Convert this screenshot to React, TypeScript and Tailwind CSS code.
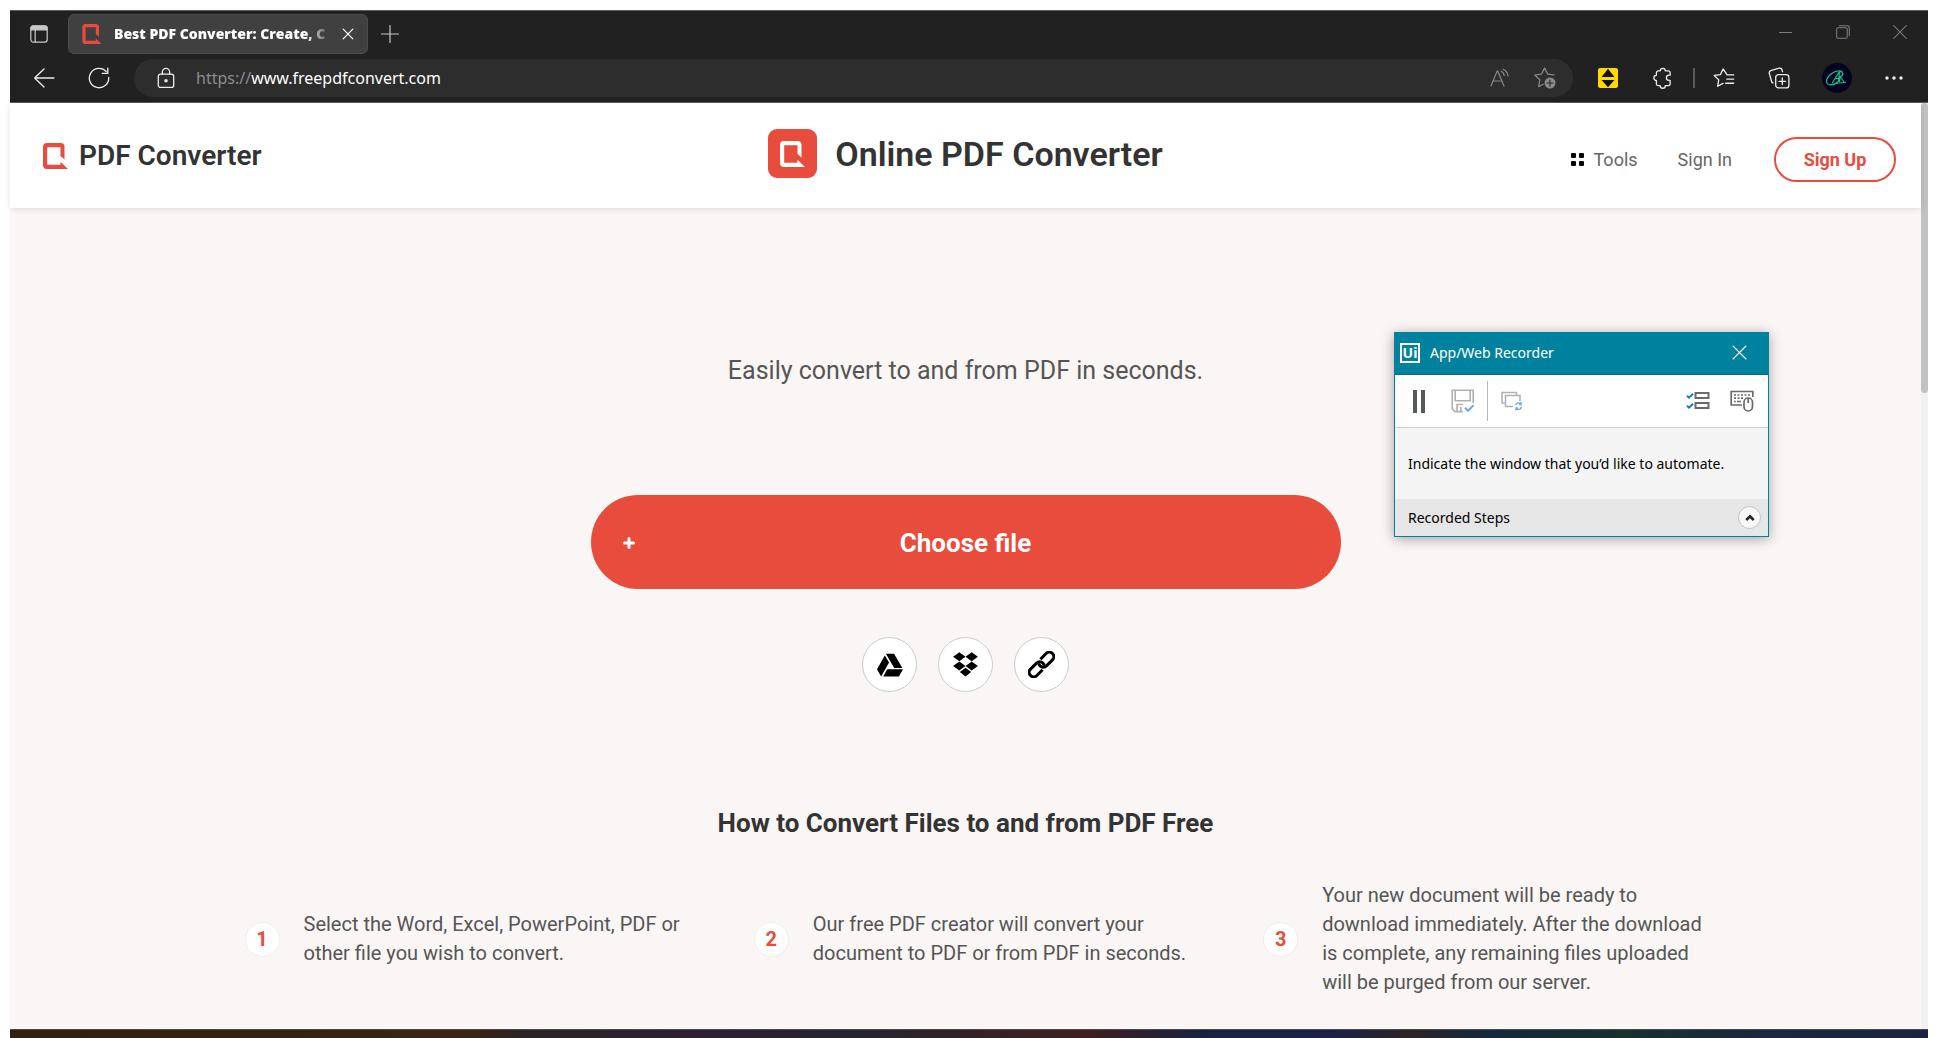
import type { ReactNode } from "react";
import { FaGoogleDrive } from "react-icons/fa";

function LogoMark({ className }: { className: string }) {
  return (
    <svg viewBox="0 0 25 26" className={className} fill="currentColor" aria-hidden="true">
      <path d="M4 0h13.5a4 4 0 0 1 4 4v12.5l-4-3.5V4.2H4.2v17.6h13.3v-3.1L25 26H4a4 4 0 0 1-4-4V4a4 4 0 0 1 4-4z" />
    </svg>
  );
}

function Icon({ size = 20, width = 1.2, className = "", children }: { size?: number; width?: number; className?: string; children: ReactNode }) {
  return (
    <svg
      width={size}
      height={size}
      viewBox="0 0 20 20"
      fill="none"
      stroke="currentColor"
      strokeWidth={width}
      strokeLinecap="round"
      strokeLinejoin="round"
      className={className}
      aria-hidden="true"
    >
      {children}
    </svg>
  );
}

function IconButton({ label, className = "", children }: { label: string; className?: string; children: ReactNode }) {
  return (
    <button type="button" aria-label={label} className={`flex h-8 shrink-0 items-center justify-center ${className}`}>
      {children}
    </button>
  );
}

function TabRow() {
  return (
    <div className="flex h-10 items-center">
      <IconButton label="Tab actions" className="ml-3 w-[34px] text-[#c8c8c8]">
        <Icon size={20}>
          <rect x="1.8" y="1.8" width="16.4" height="16.4" rx="2.6" />
          <path d="M2 3.4A1.6 1.6 0 0 1 3.6 2h12.8A1.6 1.6 0 0 1 18 3.6V5.8H2z" fill="currentColor" />
          <path d="M6.2 6v12" />
        </Icon>
      </IconButton>
      <div className="ml-3 flex h-10 w-[300px] items-center rounded-md border border-[#4c4c4c] bg-[#404040] pl-[13px]">
        <LogoMark className="h-5 w-5 shrink-0 text-[#e74c3c]" />
        <button
          type="button"
          className="ml-3 w-[218px] overflow-hidden text-left font-['Open_Sans',sans-serif] text-sm font-extrabold whitespace-nowrap text-white [mask-image:linear-gradient(to_right,black_88%,transparent)]"
        >
          Best PDF Converter: Create, C
        </button>
        <IconButton label="Close tab" className="w-8 text-white">
          <Icon size={12} width={2}>
            <path d="M2 2l16 16M18 2L2 18" />
          </Icon>
        </IconButton>
      </div>
      <IconButton label="New tab" className="ml-1 w-9 text-[#c8c8c8]">
        <Icon size={20}>
          <path d="M10 1.5v17M1.5 10h17" />
        </Icon>
      </IconButton>
      <div className="ml-auto flex items-center pb-1 text-[#7d7d7d]">
        <IconButton label="Minimize" className="w-[58px]">
          <Icon size={13} width={1.5}>
            <path d="M0 10h20" />
          </Icon>
        </IconButton>
        <IconButton label="Restore" className="w-[57px]">
          <Icon size={14} width={1.5}>
            <rect x="1" y="4" width="15" height="15" rx="2" />
            <path d="M5 1.2h11a3 3 0 0 1 3 3v11" />
          </Icon>
        </IconButton>
        <IconButton label="Close window" className="w-[57px]">
          <Icon size={14} width={1.5}>
            <path d="M1 1l18 18M19 1L1 19" />
          </Icon>
        </IconButton>
      </div>
    </div>
  );
}

function ToolbarRow() {
  return (
    <div className="mt-[5px] flex h-[38px] items-center text-[#ececec]">
      <IconButton label="Back" className="ml-4 w-9">
        <Icon size={22}>
          <path d="M19 10H1.5M10 1.8L1.5 10l8.5 8.2" />
        </Icon>
      </IconButton>
      <IconButton label="Refresh" className="ml-[19px] w-9">
        <Icon size={22}>
          <path d="M18.8 9.5A8.8 8.8 0 1 1 16.6 4.2M18 1v4.8h-5" />
        </Icon>
      </IconButton>
      <div className="ml-[17px] flex h-[38px] flex-1 items-center rounded-full bg-[#2d2d2d] pr-2">
        <IconButton label="Site information" className="ml-4 w-8">
          <Icon size={22}>
            <rect x="3" y="6.5" width="14" height="12" rx="2" />
            <path d="M6.7 6.5V4.5a3.3 3.3 0 0 1 6.6 0v2" />
            <circle cx="10" cy="12.5" r="1" fill="currentColor" />
          </Icon>
        </IconButton>
        <label className="ml-[14px] flex flex-1 items-center font-['Noto_Sans',sans-serif] text-base">
          <span className="text-[#8c8c8c]">https://</span>
          <input type="text" aria-label="Address" defaultValue="www.freepdfconvert.com" className="w-full bg-transparent text-white outline-none" />
        </label>
        <IconButton label="Read aloud" className="w-10 text-[#8a8a8a]">
          <Icon size={20}>
            <path d="M1 18L7.2 3h.6L14 18M3.3 13h8.4" />
            <path d="M11.5 3.2a6 6 0 0 1 2.700 4.300M13.200 1.200a8.500 8.500 0 0 1 4.800 6.600" />
          </Icon>
        </IconButton>
        <IconButton label="Add to favorites" className="ml-[5px] w-10 text-[#8a8a8a]">
          <svg width="22" height="22" viewBox="0 0 22 22" fill="none" stroke="currentColor" strokeWidth="1.2" strokeLinejoin="round" strokeLinecap="round" aria-hidden="true">
            <path d="M20 7.800l-6.200-.7L10.500 1 7.600 7.100.8 8l5 4.800-1.200 6.900 4.600-2.500" />
            <circle cx="16" cy="16" r="5.500" fill="currentColor" stroke="none" />
            <path d="M16 13v6M13 16h6" stroke="#2d2d2d" />
          </svg>
        </IconButton>
      </div>
      <IconButton label="Scroll extension" className="ml-[19px] w-8">
        <svg width="20" height="20" viewBox="0 0 20 20" aria-hidden="true">
          <rect width="20" height="20" rx="2" fill="#ffd900" />
          <path d="M10 .8l6.500 8.200h-13zM10 19.200l6.500-7.200h-13z" fill="#111" />
        </svg>
      </IconButton>
      <IconButton label="Extensions" className="ml-[23px] w-8">
        <Icon size={22} width={1.200}>
          <path d="M7.500 3.500a2.300 2.300 0 0 1 4.600 0h2.700a1.700 1.700 0 0 1 1.700 1.700v2.200h-1a2.400 2.400 0 0 0 0 4.800h1v3.100a1.700 1.700 0 0 1-1.700 1.700h-2.700a2.300 2.300 0 0 1-4.600 0H5.700A1.700 1.700 0 0 1 4 15.300v-3.100a2.300 2.300 0 0 1 0-4.600V5.200a1.700 1.700 0 0 1 1.700-1.700z" />
        </Icon>
      </IconButton>
      <span className="ml-[14px] h-5 w-[2px] bg-[#5a5a5a]" />
      <IconButton label="Favorites" className="ml-[13px] w-8">
        <Icon size={22} width={1.200}>
          <path d="M18.800 7.200h-6L9.200 1.800 6.700 6.900l-5.600.8 4.100 4-1 5.800 4.900-2.600M18.800 11h-6.300M18.800 14.800h-7.300" />
        </Icon>
      </IconButton>
      <IconButton label="Collections" className="ml-[23px] w-8">
        <Icon size={22} width={1.200}>
          <rect x="7" y="7" width="12" height="12" rx="2.500" />
          <path d="M13 10v6M10 13h6M4.500 14.500a2 2 0 0 1-1.200-1.300L1.200 5.800A2 2 0 0 1 2.600 3.300l7.600-2.200a2 2 0 0 1 2.500 1.400l.5 1.800" />
        </Icon>
      </IconButton>
      <IconButton label="Profile" className="ml-[26px] w-8">
        <svg width="30" height="30" viewBox="0 0 30 30" fill="none" stroke="#12c48b" strokeWidth="1.200" strokeLinecap="round" strokeLinejoin="round" aria-hidden="true">
          <circle cx="15" cy="15" r="15" fill="#03031f" stroke="none" />
          <path d="M20 8.500C13 6 5 13 4.500 18c-.3 5 7 5 11 1M10.500 19.500L17.500 8.500l-1 10M13 15.500h4M17.500 8.500c5 .5 4 4.500.5 5l4 5.500M18 13.500l-.5 5M9 21.500c4-1 9-2 14.500-2" />
        </svg>
      </IconButton>
      <IconButton label="Settings and more" className="mr-[18px] ml-[25px] w-8">
        <Icon size={18}>
          <g fill="currentColor" stroke="none">
            <circle cx="2.200" cy="10" r="1.900" />
            <circle cx="10" cy="10" r="1.900" />
            <circle cx="17.800" cy="10" r="1.900" />
          </g>
        </Icon>
      </IconButton>
    </div>
  );
}

function SiteHeader() {
  return (
    <header className="relative grid h-[105px] grid-cols-[1fr_auto_1fr] items-center bg-white px-[25px] shadow-[0_1px_6px_rgba(0,0,0,0.12)]">
      <a href="#home" className="ml-2 flex items-center gap-[11px] text-[28px] font-semibold text-[#333]">
        <LogoMark className="h-[26px] w-[25px] text-[#e74c3c]" />
        PDF Converter
      </a>
      <div className="flex items-center gap-[18px] pb-1">
        <span className="flex size-[49px] items-center justify-center rounded-[9px] bg-[#e74c3c]">
          <LogoMark className="h-[26px] w-[25px] text-white" />
        </span>
        <h1 className="text-[34px] leading-10 font-semibold text-[#333]">Online PDF Converter</h1>
      </div>
      <nav className="flex items-center justify-end pt-2 text-lg text-[#666]">
        <a href="#tools" className="flex items-center gap-[10px]">
          <span className="grid grid-cols-2 gap-[3px]">
            <i className="size-[5px] rounded-[1px] bg-black" />
            <i className="size-[5px] rounded-[1px] bg-black" />
            <i className="size-[5px] rounded-[1px] bg-black" />
            <i className="size-[5px] rounded-[1px] bg-black" />
          </span>
          Tools
        </a>
        <a href="#signin" className="ml-10">Sign In</a>
        <a href="#signup" className="ml-[42px] flex h-[45px] w-[122px] items-center justify-center rounded-full border-2 border-[#e74c3c] font-bold text-[#e74c3c]">
          Sign Up
        </a>
      </nav>
    </header>
  );
}

const steps = [
  "Select the Word, Excel, PowerPoint, PDF or other file you wish to convert.",
  "Our free PDF creator will convert your document to PDF or from PDF in seconds.",
  "Your new document will be ready to download immediately. After the download is complete, any remaining files uploaded will be purged from our server.",
];

function DropboxMark() {
  return (
    <svg width="25" height="25" viewBox="0 0 25 25" fill="currentColor" aria-hidden="true">
      <path d="M6.300.2l6.200 4.500-6.200 4.600L.1 4.700zM18.700.2l6.200 4.500-6.200 4.600-6.200-4.600zM6.300 9.500l6.200 4.600-6.200 4.500-6.200-4.500zM18.700 9.500l6.200 4.600-6.200 4.500-6.200-4.500zM12.500 15.800l5.600 4.300-5.600 4.400-5.600-4.400z" />
    </svg>
  );
}

function ChainMark() {
  return (
    <svg width="27" height="27" viewBox="0 0 27 27" fill="none" stroke="currentColor" strokeWidth="3" aria-hidden="true">
      <g transform="rotate(-45 13.500 13.500)">
        <path d="M10.500 18H2.500a4.500 4.500 0 0 1 0-9H11a4.500 4.500 0 0 1 4.500 4.500a4.500 4.500 0 0 1-1 2.800" />
        <path d="M16.500 9h8a4.500 4.500 0 0 1 0 9H16a4.500 4.500 0 0 1-4.500-4.500a4.500 4.500 0 0 1 1-2.800" />
      </g>
    </svg>
  );
}

function SourceButton({ label, children }: { label: string; children: ReactNode }) {
  return (
    <button type="button" aria-label={label} className="flex size-[55px] items-center justify-center rounded-full border border-[#ccc] bg-white text-[26px] text-black">
      {children}
    </button>
  );
}

function Recorder() {
  return (
    <section
      aria-label="App/Web Recorder"
      className="absolute top-[322px] right-[159px] w-[375px] border border-[#00829e] bg-white font-['Noto_Sans',sans-serif] text-sm text-black shadow-[0_2px_12px_rgba(0,0,0,0.35)]"
    >
      <div className="flex h-[42px] items-center border-b border-[#006f87] bg-[#00829e] pb-[2px] pl-[5px] text-white">
        <span className="flex size-5 items-center justify-center border-2 border-white text-sm leading-none font-bold">Ui</span>
        <span className="ml-[10px]">App/Web Recorder</span>
        <IconButton label="Close recorder" className="mr-[13px] ml-auto w-8">
          <Icon size={15} width={1.800}>
            <path d="M1.500 1.500l17 17M18.500 1.500l-17 17" />
          </Icon>
        </IconButton>
      </div>
      <div className="flex h-[53px] items-center border-b border-[#d0d0d0]">
        <IconButton label="Pause" className="ml-2 w-8">
          <span className="flex gap-[4px]">
            <i className="h-[23px] w-1 bg-[#55585c]" />
            <i className="h-[23px] w-1 bg-[#55585c]" />
          </span>
        </IconButton>
        <IconButton label="Save" className="ml-3 w-8">
          <svg width="24" height="24" viewBox="0 0 24 24" fill="none" stroke="#b0b0b0" strokeWidth="1.600" aria-hidden="true">
            <path d="M22.200 14V1.200H1.200V20l2.600 2.600H12M4.200 1.200v10.600h15V1.200M6 22v-6.500h6M9.800 18v4" />
            <path d="M14 18.800l3 3 5.500-5.500" stroke="#6fa8ee" strokeWidth="2" />
          </svg>
        </IconButton>
        <span className="ml-2 h-10 w-px bg-[#b8b8b8]" />
        <IconButton label="Refresh window" className="ml-2 w-8">
          <svg width="22" height="20" viewBox="0 0 22 20" fill="none" stroke="#b0b0b0" strokeWidth="1.500" aria-hidden="true">
            <path d="M4 12H1V1.500h14.500V4.500" />
            <path d="M12 15.500H4.500v-11h14.500V10" />
            <path d="M14.500 14a3.200 3.200 0 0 1 5.500-1v-2M20.500 16a3.200 3.200 0 0 1-5.500 1.500v2M20 13.500h-2M15 17h2" stroke="#6fa8ee" strokeWidth="1.300" />
          </svg>
        </IconButton>
        <IconButton label="Show steps" className="ml-auto w-9">
          <svg width="24" height="18" viewBox="0 0 24 18" fill="none" stroke="#6a6a6a" strokeWidth="2" aria-hidden="true">
            <rect x="9.500" y="1" width="13" height="5" />
            <rect x="9.500" y="11" width="13" height="5" />
            <path d="M1 3.700l2 2 4-4M1 13.700l2 2 4-4" stroke="#1976d2" />
          </svg>
        </IconButton>
        <IconButton label="Keyboard and mouse" className="mr-2 ml-2 w-9">
          <svg width="24" height="22" viewBox="0 0 24 22" fill="none" stroke="#6a6a6a" strokeWidth="1.700" aria-hidden="true">
            <path d="M12 15H1.200V1.500h21.600V7" />
            <path d="M4 5h17M4 8.200h9" strokeDasharray="2 1.500" />
            <path d="M4 11.500h1.800M7 11.500h4" />
            <rect x="14" y="8" width="8.500" height="13" rx="4.200" fill="#fff" />
            <path d="M18.200 8v5" />
          </svg>
        </IconButton>
      </div>
      <p className="flex h-[71px] items-center bg-[#f4f4f4] pl-[13px]">Indicate the window that you’d like to automate.</p>
      <div className="flex h-[37px] items-center justify-between bg-[#e6e6e6] pr-[7px] pl-[13px]">
        Recorded Steps
        <button type="button" aria-label="Expand recorded steps" className="flex size-[23px] items-center justify-center rounded-full border border-[#c4c4c4] bg-[#f8f8f8] text-[#222]">
          <Icon size={10} width={5}>
            <path d="M2.500 14L10 6.500l7.500 7.500" strokeLinecap="butt" strokeLinejoin="miter" />
          </Icon>
        </button>
      </div>
    </section>
  );
}

export default function App() {
  return (
    <div className="min-h-screen bg-white px-[10px] pt-[10px] font-[Roboto,sans-serif]">
      <div className="relative">
        <div className="border-y border-[#5c5c5c] bg-[#212121] pt-[3px] pb-[5px]">
          <TabRow />
          <ToolbarRow />
        </div>
        <div className="flex">
          <div className="flex-1">
            <SiteHeader />
            <main className="flex flex-col items-center bg-[#faf6f5] pt-[145px] pb-8">
              <p className="text-[25px] leading-9 text-[#555]">Easily convert to and from PDF in seconds.</p>
              <button
                type="button"
                className="mt-[106px] grid h-[94px] w-full max-w-[750px] grid-cols-[1fr_auto_1fr] items-center rounded-full bg-[#e74c3c] px-8 pt-[2px] text-left text-[26px] font-bold text-white"
              >
                <svg width="12" height="12" viewBox="0 0 12 12" stroke="currentColor" strokeWidth="3" strokeLinecap="round" aria-hidden="true">
                  <path d="M6 1.500v9M1.500 6h9" />
                </svg>
                Choose file
              </button>
              <div className="mt-12 flex gap-[21px]">
                <SourceButton label="Google Drive"><FaGoogleDrive /></SourceButton>
                <SourceButton label="Dropbox"><DropboxMark /></SourceButton>
                <SourceButton label="From link"><ChainMark /></SourceButton>
              </div>
              <h2 className="mt-[113px] text-[26px] leading-9 font-bold text-[#333]">How to Convert Files to and from PDF Free</h2>
              <ol className="mt-10 grid w-full max-w-[1528px] grid-cols-3">
                {steps.map((text, i) => (
                  <li key={text} className="flex items-center gap-6 pr-4 pl-[43px]">
                    <span className="flex size-[35px] shrink-0 items-center justify-center rounded-full border border-[#eee] bg-white text-xl font-bold text-[#e74c3c]">{i + 1}</span>
                    <p className="text-xl leading-[29px] text-[#555]">{text}</p>
                  </li>
                ))}
              </ol>
            </main>
          </div>
          <div className="w-[7px] bg-[#f1f1f1]">
            <div className="h-[290px] rounded-full bg-[#c1c1c1]" />
          </div>
        </div>
        <div className="h-[9px] border-t border-[#4a4a4a] bg-[linear-gradient(to_right,#33200f,#3a2312_24%,#2a2426_27%,#2e1f33_36%,#25252f_44%,#401e20_56%,#1a2140_62%,#1c2048_69%,#2d2426_73%,#14283f_77%,#16302c_84%,#1a2840_92%,#1b2340)]" />
        <Recorder />
      </div>
    </div>
  );
}
